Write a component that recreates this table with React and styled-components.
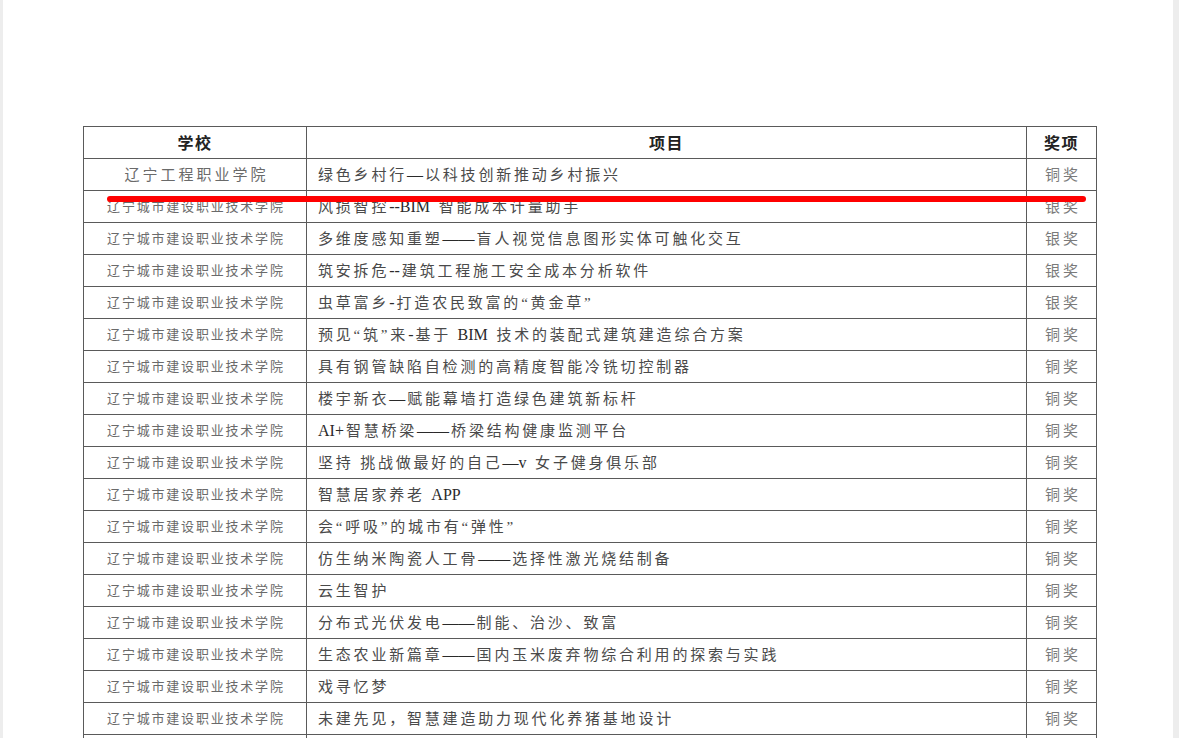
import React from 'react'
import styled, { createGlobalStyle } from 'styled-components'

const rows = [
  ['辽宁工程职业学院', '绿色乡村行—以科技创新推动乡村振兴', '铜奖', true],
  ['辽宁城市建设职业技术学院', '风损智控--BIM 智能成本计量助手', '银奖'],
  ['辽宁城市建设职业技术学院', '多维度感知重塑——盲人视觉信息图形实体可触化交互', '银奖'],
  ['辽宁城市建设职业技术学院', '筑安拆危--建筑工程施工安全成本分析软件', '银奖'],
  ['辽宁城市建设职业技术学院', '虫草富乡-打造农民致富的“黄金草”', '银奖'],
  ['辽宁城市建设职业技术学院', '预见“筑”来-基于 BIM 技术的装配式建筑建造综合方案', '铜奖'],
  ['辽宁城市建设职业技术学院', '具有钢管缺陷自检测的高精度智能冷铣切控制器', '铜奖'],
  ['辽宁城市建设职业技术学院', '楼宇新衣—赋能幕墙打造绿色建筑新标杆', '铜奖'],
  ['辽宁城市建设职业技术学院', 'AI+智慧桥梁——桥梁结构健康监测平台', '铜奖'],
  ['辽宁城市建设职业技术学院', '坚持 挑战做最好的自己—v 女子健身俱乐部', '铜奖'],
  ['辽宁城市建设职业技术学院', '智慧居家养老 APP', '铜奖'],
  ['辽宁城市建设职业技术学院', '会“呼吸”的城市有“弹性”', '铜奖'],
  ['辽宁城市建设职业技术学院', '仿生纳米陶瓷人工骨——选择性激光烧结制备', '铜奖'],
  ['辽宁城市建设职业技术学院', '云生智护', '铜奖'],
  ['辽宁城市建设职业技术学院', '分布式光伏发电——制能、治沙、致富', '铜奖'],
  ['辽宁城市建设职业技术学院', '生态农业新篇章——国内玉米废弃物综合利用的探索与实践', '铜奖'],
  ['辽宁城市建设职业技术学院', '戏寻忆梦', '铜奖'],
  ['辽宁城市建设职业技术学院', '未建先见，智慧建造助力现代化养猪基地设计', '铜奖'],
  ['', '', ''],
]

// latin words and dashes sit tight, the Chinese text is spaced out
function Runs({ text }) {
  return text.split(/([A-Za-z0-9+\-—]+)/).map((part, i) =>
    i % 2 ? <Tight key={i}>{part}</Tight> : part
  )
}

function App() {
  return (
    <>
      <GlobalStyle />
      <Viewer>
        <Page>
          <Table>
            <colgroup>
              <col style={{ width: 223 }} />
              <col style={{ width: 720 }} />
              <col style={{ width: 70 }} />
            </colgroup>
            <thead>
              <tr>
                <Th>学校</Th>
                <Th>项目</Th>
                <Th>奖项</Th>
              </tr>
            </thead>
            <tbody>
              {rows.map(([school, project, award, wide], i) => (
                <tr key={i}>
                  <School $wide={wide}>{school}</School>
                  <Project><Runs text={project} /></Project>
                  <Award>{award}</Award>
                </tr>
              ))}
            </tbody>
          </Table>
          <Mark />
        </Page>
      </Viewer>
    </>
  )
}

const GlobalStyle = createGlobalStyle`
  html, body {
    margin: 0 ;
    padding: 0 ;
    background: #ededed ;
    overflow: hidden ;
  }
`
const Viewer = styled.div`
  height: 738px ;
  padding: 0 6px 0 3px ;
  overflow: hidden ;
`
const Page = styled.div`
  position: relative ;
  background: #fff ;
  height: 100% ;
  padding: 126px 0 0 80px ;
  box-sizing: border-box ;
`
const Table = styled.table`
  border-collapse: collapse ;
  table-layout: fixed ;
  width: 1013px ;
  font-family: "Liberation Serif", "Noto Sans CJK SC", serif ;
`
const Cell = styled.td`
  border: 1px solid #5a5a5a ;
  height: 29px ;
  padding: 0 0 2px ;
  vertical-align: middle ;
  white-space: nowrap ;
  overflow: hidden ;
`
const Th = styled(Cell).attrs({ as: 'th' })`
  font-family: "Noto Sans CJK SC", sans-serif ;
  font-size: 16px ;
  font-weight: bold ;
  color: #222 ;
  letter-spacing: 1.5px ;
  text-align: center ;
`
const School = styled(Cell)`
  text-align: center ;
  color: #6a6a6a ;
  font-size: ${p => (p.$wide ? '15px' : '13px')} ;
  letter-spacing: ${p => (p.$wide ? '3px' : '1.8px')} ;
  text-indent: ${p => (p.$wide ? '3px' : '1.8px')} ;
`
const Project = styled(Cell)`
  color: #4a4a4a ;
  font-size: 15px ;
  letter-spacing: 2.8px ;
  padding-left: 11px ;
`
const Tight = styled.span`
  letter-spacing: 0 ;
  color: #2a2a2a ;
  font-size: 16px ;
  margin-right: 2px ;
`
const Award = styled(Cell)`
  text-align: center ;
  color: #7a7a7a ;
  font-size: 15px ;
  letter-spacing: 3px ;
  text-indent: 3px ;
`
const Mark = styled.div`
  position: absolute ;
  left: 104px ;
  top: 196px ;
  width: 979px ;
  height: 6px ;
  border-radius: 3px ;
  background: #ff0000 ;
`

export default App
